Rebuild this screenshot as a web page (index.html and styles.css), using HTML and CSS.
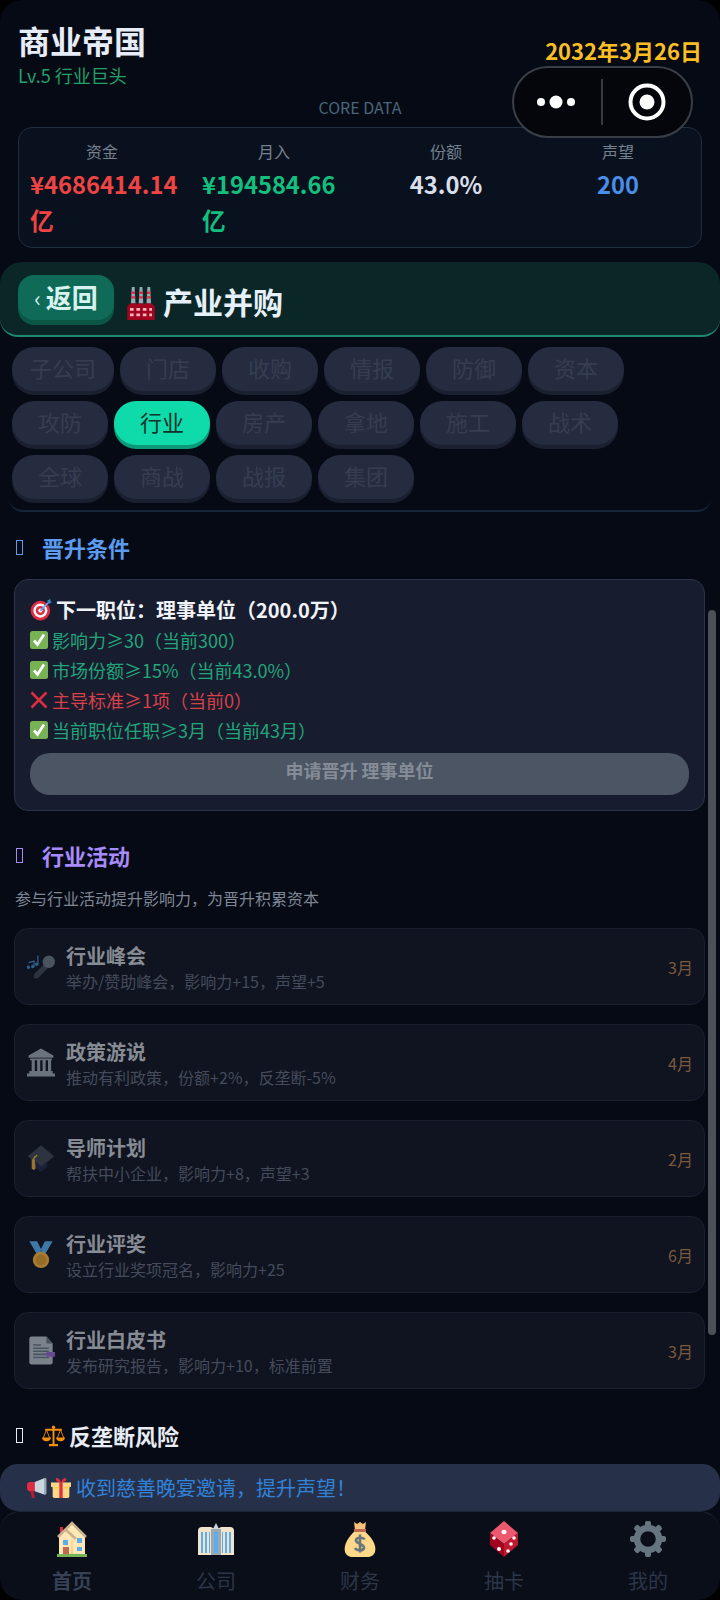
FILE: index.html
```html
<!DOCTYPE html>
<html lang="zh-CN">
<head>
    <meta charset="UTF-8">
    <meta name="viewport" content="width=device-width, initial-scale=1.0">
    <title>商业帝国</title>
    <link rel="stylesheet" href="styles.css">
</head>
<body>
<div class="page">
    <header class="top">
        <div class="top-row">
            <div>
                <div class="game-title">商业帝国</div>
                <div class="level">Lv.5 行业巨头</div>
            </div>
            <div class="date">2032年3月26日</div>
        </div>
        <div class="core-label">CORE DATA</div>
        <div class="stats">
            <div class="stat">
                <div class="stat-label">资金</div>
                <div class="stat-value red">¥4686414.14亿</div>
            </div>
            <div class="stat">
                <div class="stat-label">月入</div>
                <div class="stat-value green">¥194584.66亿</div>
            </div>
            <div class="stat">
                <div class="stat-label">份额</div>
                <div class="stat-value white">43.0%</div>
            </div>
            <div class="stat">
                <div class="stat-label">声望</div>
                <div class="stat-value blue">200</div>
            </div>
        </div>
    </header>

    <!-- 小程序胶囊 -->
    <div class="capsule">
        <svg class="capsule-dots" viewBox="0 0 46 14"><circle cx="8" cy="7" r="4"/><circle cx="23" cy="7" r="6.5"/><circle cx="38" cy="7" r="4"/></svg>
        <span class="capsule-line"></span>
        <svg class="capsule-target" viewBox="0 0 38 38"><circle cx="19" cy="19" r="16.5" fill="none" stroke="#fff" stroke-width="4"/><circle cx="19" cy="19" r="7.5" fill="#fff"/></svg>
    </div>

    <div class="sub-head">
        <div class="back-btn"><span class="back-arrow">‹</span>返回</div>
        <svg class="head-icon" viewBox="0 0 30 36">
            <path fill="#99aab5" d="M5 0h3l1 18H4zM13.5 0h3l1 18h-5zM22 0h3l1 18h-5z"/>
            <path fill="#dd2e44" d="M4.7 5h3.6l.2 2.5h-4zM4.4 10h4.2l.2 2.5H4.3zM13.2 5h3.6l.2 2.5h-4zM12.9 10h4.2l.2 2.5h-4.6zM21.7 5h3.6l.2 2.5h-4zM21.4 10h4.2l.2 2.5h-4.6z"/>
            <path fill="#a0041e" d="M0 21l3-3h24l3 3v15H0z"/>
            <path fill="#ffb3bd" d="M3 23h4v3H3zM10 23h4v3h-4zM17 23h4v3h-4zM24 23h3v3h-3zM3 29h4v3H3zM10 29h4v3h-4zM17 29h4v3h-4zM24 29h3v3h-3z"/>
        </svg>
        <div class="head-title">产业并购</div>
    </div>

    <div class="tabs">
        <div class="tab">子公司</div>
        <div class="tab">门店</div>
        <div class="tab">收购</div>
        <div class="tab">情报</div>
        <div class="tab">防御</div>
        <div class="tab">资本</div>
        <div class="tab">攻防</div>
        <div class="tab active">行业</div>
        <div class="tab">房产</div>
        <div class="tab">拿地</div>
        <div class="tab">施工</div>
        <div class="tab">战术</div>
        <div class="tab">全球</div>
        <div class="tab">商战</div>
        <div class="tab">战报</div>
        <div class="tab">集团</div>
    </div>

    <main class="content">
        <span class="scroll-thumb"></span>

        <h2 class="section-title title-blue"><span class="tofu"></span>晋升条件</h2>
        <div class="promo-card">
            <div class="promo-title">
                <svg class="promo-icon" viewBox="0 0 36 36">
                    <circle cx="17" cy="19" r="16" fill="#dd2e44"/><circle cx="17" cy="19" r="11.5" fill="#f5f8fa"/><circle cx="17" cy="19" r="7.5" fill="#dd2e44"/><circle cx="17" cy="19" r="3.5" fill="#f5f8fa"/>
                    <path d="M17 19L31 5" stroke="#55acee" stroke-width="2.5"/><path fill="#3b88c3" d="M28 3l5-3 1 4 2 1-5 3z"/>
                </svg>下一职位：理事单位（200.0万）
            </div>
            <div class="cond pass"><svg class="cond-icon" viewBox="0 0 36 36"><rect x="0" y="0" width="36" height="36" rx="5" fill="#77b255"/><path d="M8 19l7 8L28 7" fill="none" stroke="#fff" stroke-width="5.5"/></svg>影响力≥30（当前300）</div>
            <div class="cond pass"><svg class="cond-icon" viewBox="0 0 36 36"><rect x="0" y="0" width="36" height="36" rx="5" fill="#77b255"/><path d="M8 19l7 8L28 7" fill="none" stroke="#fff" stroke-width="5.5"/></svg>市场份额≥15%（当前43.0%）</div>
            <div class="cond fail"><svg class="cond-icon" viewBox="0 0 36 36"><path d="M3 3l30 30M33 3L3 33" stroke="#dd2e44" stroke-width="5"/></svg>主导标准≥1项（当前0）</div>
            <div class="cond pass"><svg class="cond-icon" viewBox="0 0 36 36"><rect x="0" y="0" width="36" height="36" rx="5" fill="#77b255"/><path d="M8 19l7 8L28 7" fill="none" stroke="#fff" stroke-width="5.5"/></svg>当前职位任职≥3月（当前43月）</div>
            <div class="promo-btn">申请晋升 理事单位</div>
        </div>

        <h2 class="section-title title-purple"><span class="tofu"></span>行业活动</h2>
        <p class="section-desc">参与行业活动提升影响力，为晋升积累资本</p>

        <div class="act-list">
            <div class="act">
                <svg class="act-icon" viewBox="0 0 36 36">
                    <path d="M9 28L24 13l5 5L14 33H9z" fill="#3d4450"/><circle cx="28" cy="12" r="8" fill="#67757f"/>
                    <path d="M2 13l7-2v8M14 4v11" fill="none" stroke="#3b88c3" stroke-width="1.6"/><circle cx="1.6" cy="19" r="2.2" fill="#3b88c3"/><circle cx="7.4" cy="18" r="2.2" fill="#3b88c3"/><circle cx="12.4" cy="15" r="2.2" fill="#3b88c3"/>
                </svg>
                <div class="act-text">
                    <div class="act-name">行业峰会</div>
                    <div class="act-sub">举办/赞助峰会，影响力+15，声望+5</div>
                </div>
                <div class="act-time">3月</div>
            </div>
            <div class="act">
                <svg class="act-icon" viewBox="0 0 36 36" fill="#99a3ad">
                    <path d="M18 0L2 9v3h32V9zM4 13h28v2H4zM6 15h4v14H6zM13 15h4v14h-4zM20 15h4v14h-4zM27 15h4v14h-4zM3 29h30v3H3zM0 32h36v4H0z"/>
                </svg>
                <div class="act-text">
                    <div class="act-name">政策游说</div>
                    <div class="act-sub">推动有利政策，份额+2%，反垄断-5%</div>
                </div>
                <div class="act-time">4月</div>
            </div>
            <div class="act">
                <svg class="act-icon" viewBox="0 0 36 36">
                    <path fill="#3d4450" d="M18 1L35 15 18 29 1 15z"/>
                    <path fill="#1f2a44" d="M9 20l9 8 8-6v7l-8 6-9-6z"/>
                    <path d="M8 19c1-2 3-4 5-5" fill="none" stroke="#f4c430" stroke-width="1.6"/><path fill="#e0a93b" d="M6 19h4l1 12-2 2-3-2z"/>
                </svg>
                <div class="act-text">
                    <div class="act-name">导师计划</div>
                    <div class="act-sub">帮扶中小企业，影响力+8，声望+3</div>
                </div>
                <div class="act-time">2月</div>
            </div>
            <div class="act">
                <svg class="act-icon" viewBox="0 0 36 36">
                    <path fill="#55acee" d="M3 1h10l5 10 5-10h10L22 20h-8z"/>
                    <path fill="#3b88c3" d="M14 20l4-9 4 9z"/>
                    <circle cx="18" cy="25" r="10.5" fill="#f4b13f"/><circle cx="18" cy="25" r="7" fill="#dc9a2a"/>
                </svg>
                <div class="act-text">
                    <div class="act-name">行业评奖</div>
                    <div class="act-sub">设立行业奖项冠名，影响力+25</div>
                </div>
                <div class="act-time">6月</div>
            </div>
            <div class="act">
                <svg class="act-icon" viewBox="0 0 36 36">
                    <path fill="#b3bcc4" d="M3 3a3 3 0 0 1 3-3h19l8 9v24a3 3 0 0 1-3 3H6a3 3 0 0 1-3-3z"/>
                    <path fill="#66757f" d="M25 0l8 9h-8zM8 10h10v2H8zM8 14h20v2H8zM8 18h20v2H8zM8 22h20v2H8zM8 26h20v2H8z"/>
                    <path fill="#9266cc" d="M26 20h10v6H26l-3-3z"/>
                </svg>
                <div class="act-text">
                    <div class="act-name">行业白皮书</div>
                    <div class="act-sub">发布研究报告，影响力+10，标准前置</div>
                </div>
                <div class="act-time">3月</div>
            </div>
        </div>

        <h2 class="section-title title-white"><span class="tofu"></span>
            <svg class="title-icon" viewBox="0 0 36 36" fill="none" stroke="#f4900c">
                <path d="M18 3v29M5 9h26" stroke-width="3"/><path d="M11 33h14" stroke-width="3.5"/><circle cx="18" cy="5" r="2.5" fill="#f4900c" stroke="none"/>
                <path d="M7 9L2 22M7 9l5 13M29 9l-5 13M29 9l5 13" stroke-width="1.4"/>
                <path d="M0 21h14a7 6 0 0 1-14 0zM22 21h14a7 6 0 0 1-14 0z" fill="#f4900c" stroke="none"/>
            </svg>反垄断风险
        </h2>
    </main>

    <div class="notice">
        <svg class="notice-icon" viewBox="0 0 36 36">
            <path fill="#be1931" d="M6 24h6l2 12H9z"/><path fill="#dd2e44" d="M0 13a6 6 0 0 1 6-6h8v17H6a6 6 0 0 1-6-6z"/>
            <path fill="#ccd6dd" d="M14 7L32 0v30L14 24z"/><rect x="31" y="0" width="4" height="30" rx="2" fill="#99aab5"/>
        </svg>
        <svg class="notice-icon" viewBox="0 0 36 36">
            <path fill="#fdd888" d="M3 13h30v20a3 3 0 0 1-3 3H6a3 3 0 0 1-3-3z"/><path fill="#fdd888" d="M0 8h36v8H0z"/>
            <path fill="#dd2e44" d="M15 8h6v28h-6zM18 8C12 8 7 5 9 1c3-3 7 2 9 7 2-5 6-10 9-7 2 4-3 7-9 7z"/><path fill="#ffcc4d" d="M3 16h12v3H3zM21 16h12v3H21z"/>
        </svg>
        <span class="notice-text">收到慈善晚宴邀请，提升声望！</span>
    </div>

    <nav class="tabbar">
        <div class="nav-item on">
            <svg class="nav-icon" viewBox="0 0 36 36">
                <path fill="#dd2e44" d="M6 6h3v8H6z"/>
                <path fill="#ffe8b6" d="M18 1L5 15v18h26V15z"/>
                <path fill="#ffcc7f" d="M18 8l-1 25h2z"/>
                <path fill="none" stroke="#c9b28f" stroke-width="2.5" d="M4 16L18 2l14 14M11 8l11 10"/>
                <path fill="#5dadec" d="M9 19h5v5H9zM23 17h5v5h-5zM23 26h5v4h-5z"/><path fill="#c1694f" d="M9 26h6v7H9z"/>
                <path fill="#77b255" d="M3 33h30v3H3z"/>
            </svg>
            <span>首页</span>
        </div>
        <div class="nav-item">
            <svg class="nav-icon" viewBox="0 0 36 36">
                <path fill="#ccd6dd" d="M15 8l3-6 3 6v4h-6z"/>
                <path fill="#f1e3cc" d="M0 10a4 4 0 0 1 4-4h9l5 3 5-3h9a4 4 0 0 1 4 4v24H0z"/>
                <path fill="#99aab5" d="M13 8h10v26H13z"/>
                <path fill="#5dadec" d="M3 11h2v21H3zM7 11h2v21H7zM11 11h1v21h-1zM16 11h4v21h-4zM24 11h1v21h-1zM27 11h2v21h-2zM31 11h2v21h-2z"/>
            </svg>
            <span>公司</span>
        </div>
        <div class="nav-item">
            <svg class="nav-icon" viewBox="0 0 36 36">
                <path fill="#fdd888" d="M13 10C7 15 1 24 3 31c1 3 4 5 8 5h14c4 0 7-2 8-5 2-7-4-16-11-21z"/>
                <path fill="#f4c27a" d="M12 1l3 2 3-2 3 2 3-2-1 8H13z"/><path fill="#bf6952" d="M12 8h12v3H12z"/>
                <path fill="none" stroke="#67757f" stroke-width="2.6" d="M22.5 18.5c-1-2-7.5-3-8.5.5-1 4 8.5 3.5 8 8-.5 3-7.5 3-9 0M18 13.5v18"/>
            </svg>
            <span>财务</span>
        </div>
        <div class="nav-item">
            <svg class="nav-icon" viewBox="0 0 36 36">
                <path fill="#ea596e" d="M18 0l14 12-14 11L4 12z"/>
                <path fill="#a0041e" d="M4 12l14 11v13L4 24z"/>
                <path fill="#be1931" d="M32 12L18 23v13l14-12z"/>
                <g fill="#fff"><ellipse cx="18" cy="11" rx="2.6" ry="2.2"/><circle cx="8" cy="17" r="1.8"/><circle cx="13" cy="28" r="2"/><circle cx="28" cy="17" r="1.8"/><circle cx="25" cy="23" r="1.8"/><circle cx="22" cy="30" r="1.8"/></g>
            </svg>
            <span>抽卡</span>
        </div>
        <div class="nav-item">
            <svg class="nav-icon" viewBox="0 0 36 36">
                <circle cx="18" cy="18" r="11" fill="none" stroke="#66757f" stroke-width="6.5"/>
                <g fill="#66757f">
                    <rect x="15" y="0" width="6" height="7" rx="2"/><rect x="15" y="29" width="6" height="7" rx="2"/>
                    <rect x="0" y="15" width="7" height="6" rx="2"/><rect x="29" y="15" width="7" height="6" rx="2"/>
                    <rect x="15" y="0" width="6" height="7" rx="2" transform="rotate(45 18 18)"/><rect x="15" y="0" width="6" height="7" rx="2" transform="rotate(135 18 18)"/>
                    <rect x="15" y="0" width="6" height="7" rx="2" transform="rotate(225 18 18)"/><rect x="15" y="0" width="6" height="7" rx="2" transform="rotate(315 18 18)"/>
                </g>
            </svg>
            <span>我的</span>
        </div>
    </nav>
</div>
</body>
</html>
```
FILE: styles.css
```css
* {
    box-sizing: border-box;
}

html, body {
    margin: 0;
    padding: 0;
    background: #000;
}

body {
    font-family: "Noto Sans CJK SC", "Noto Sans", sans-serif;
    width: 720px;
    height: 1600px;
    overflow: hidden;
}

.page {
    position: relative;
    width: 720px;
    height: 1600px;
    display: flex;
    flex-direction: column;
    background: #060a14;
    border-radius: 22px;
    overflow: hidden;
}

/* top header */
.top {
    padding: 18px 18px 0;
}

.top-row {
    display: flex;
    justify-content: space-between;
    align-items: flex-start;
}

.game-title {
    font-size: 32px;
    line-height: 44px;
    font-weight: 700;
    color: #e6edf8;
}

.level {
    font-size: 18px;
    line-height: 24px;
    margin-top: 1px;
    color: #22a06b;
}

.date {
    font-size: 22px;
    line-height: 32px;
    font-weight: 700;
    color: #fbbf24;
    margin-top: 16px;
}

.core-label {
    text-align: center;
    font-size: 16px;
    line-height: 20px;
    margin-top: 10px;
    color: #4a6678;
}

.stats {
    display: grid;
    grid-template-columns: repeat(4, 1fr);
    column-gap: 28px;
    height: 121px;
    margin-top: 10px;
    padding: 12px 11px 0;
    background: #0a111e;
    border: 1px solid #1f2f3f;
    border-radius: 14px;
}

.stat {
    display: flex;
    flex-direction: column;
    align-items: center;
    min-width: 0;
}

.stat-label {
    font-size: 16px;
    line-height: 22px;
    color: #75808f;
}

.stat-value {
    max-width: 100%;
    font-size: 23.7px;
    line-height: 36px;
    font-weight: 700;
    margin-top: 4px;
}

.red { color: #ef4444; }
.green { color: #12bf7f; }
.white { color: #d9dfea; }
.blue { color: #4a8ee8; }

/* capsule of the host app */
.capsule {
    position: absolute;
    left: 512px;
    top: 66px;
    width: 181px;
    height: 72px;
    display: flex;
    align-items: center;
    background: #04060c;
    border: 2px solid #3a3f47;
    border-radius: 36px;
}

.capsule-dots {
    width: 46px;
    height: 14px;
    margin-left: 19px;
    fill: #fff;
}

.capsule-line {
    width: 2px;
    height: 46px;
    margin-left: 22px;
    background: #363a41;
}

.capsule-target {
    width: 38px;
    height: 38px;
    margin-left: 25px;
}

/* page head */
.sub-head {
    height: 75px;
    margin-top: 14px;
    padding: 13px 18px 0;
    display: flex;
    align-items: flex-start;
    background: #0a2627;
    border-bottom: 2px solid #1c8a72;
    border-radius: 22px 22px 18px 18px;
}

.back-btn {
    width: 96px;
    height: 45px;
    padding-bottom: 1px;
    display: flex;
    align-items: center;
    justify-content: center;
    font-size: 26px;
    line-height: 44px;
    font-weight: 700;
    color: #d8f3ef;
    background: #0f6b57;
    border-radius: 16px;
    box-shadow: 0 5px 0 #0c5646;
}

.back-arrow {
    font-size: 22px;
    font-weight: 400;
    margin-right: 5px;
}

.head-icon {
    width: 28px;
    height: 33px;
    margin: 12px 0 0 13px;
}

.head-title {
    font-size: 30px;
    line-height: 42px;
    font-weight: 700;
    color: #e6f0f8;
    margin: 5px 0 0 8px;
}

/* tabs */
.tabs {
    display: flex;
    flex-wrap: wrap;
    gap: 10px 6px;
    padding: 10px 12px 10px 3px;
    height: 175px;
    margin: 0 9px;
    align-content: flex-start;
    border-bottom: 2px solid #15263a;
    border-radius: 0 0 14px 14px;
}

.tab {
    min-width: 96px;
    height: 44px;
    padding: 0 18px 4px;
    display: flex;
    align-items: center;
    justify-content: center;
    font-size: 22px;
    color: #353e51;
    background: #252c40;
    border-radius: 22px;
    box-shadow: 0 4px 0 #1a2030;
}

.tab.active {
    color: #0d332a;
    background: #0fdaa9;
    box-shadow: 0 4px 0 #0a9a78;
}

/* scroll area */
.content {
    position: relative;
    flex: 1;
    min-height: 0;
    overflow: hidden;
    padding: 20px 15px 0 14px;
}

.scroll-thumb {
    position: absolute;
    left: 708px;
    top: 98px;
    width: 8px;
    height: 725px;
    background: #4c5058;
    border-radius: 4px;
}

.section-title {
    display: flex;
    align-items: center;
    height: 30px;
    margin: 29px 0 14px;
    font-size: 22px;
    line-height: 30px;
    font-weight: 700;
}

.section-title:first-of-type {
    margin-top: 0;
}

.tofu {
    width: 7px;
    height: 15px;
    margin: 0 19px 0 2px;
    border: 1px solid currentColor;
}

.title-blue { color: #5b9cf0; }
.title-purple { color: #a78bfa; }
.title-white { color: #e8edf5; }

.title-icon {
    width: 23px;
    height: 23px;
    margin-right: 4px;
}

.promo-card {
    height: 232px;
    margin-top: 17px;
    padding: 15px 15px 14px;
    background: #171d2e;
    border: 1px solid #2a3347;
    border-radius: 14px;
}

.promo-title {
    display: flex;
    align-items: center;
    font-size: 20px;
    line-height: 30px;
    font-weight: 700;
    color: #f0f3f8;
}

.promo-icon {
    width: 22px;
    height: 22px;
    margin-right: 4px;
}

.cond {
    display: flex;
    align-items: center;
    font-size: 18px;
    line-height: 30px;
}

.cond-icon {
    width: 18px;
    height: 18px;
    margin-right: 4px;
}

.pass { color: #23a57c; }
.fail { color: #d9404a; }

.promo-btn {
    height: 42px;
    margin-top: 8px;
    text-align: center;
    font-size: 18px;
    line-height: 35px;
    font-weight: 700;
    color: #858c98;
    background: #4b5563;
    border-radius: 20px;
}

.section-desc {
    margin: 16px 0 18px 1px;
    font-size: 16px;
    line-height: 24px;
    color: #7f8796;
}

.act-list {
    display: flex;
    flex-direction: column;
    gap: 19px;
    margin-bottom: 31px;
}

.act {
    height: 77px;
    display: flex;
    align-items: flex-start;
    padding: 14px 11px 0 12px;
    background: #0f1420;
    border: 1px solid #1a2030;
    border-radius: 14px;
}

.act-icon {
    width: 28px;
    height: 29px;
    margin: 9px 11px 0 0;
    opacity: .66;
}

.act-text {
    flex: 1;
}

.act-name {
    font-size: 20px;
    line-height: 26px;
    font-weight: 700;
    color: #878b94;
}

.act-sub {
    font-size: 16px;
    line-height: 24px;
    color: #454b5a;
}

.act-time {
    font-size: 16px;
    line-height: 24px;
    margin-top: 12px;
    color: #7a5a3e;
}

/* notice */
.notice {
    flex: none;
    height: 47px;
    display: flex;
    align-items: center;
    padding-left: 27px;
    background: #263149;
    border-radius: 18px;
}

.notice-icon {
    width: 20px;
    height: 20px;
    margin-right: 4px;
}

.notice-text {
    margin-left: 1px;
    font-size: 20px;
    line-height: 28px;
    color: #3182d8;
}

/* bottom bar */
.tabbar {
    flex: none;
    height: 89px;
    display: flex;
    background: #0a0e18;
    border-top: 1px solid #1b2638;
    border-radius: 20px 20px 0 0;
}

.nav-item {
    flex: 1;
    display: flex;
    flex-direction: column;
    align-items: center;
    padding-top: 9px;
    font-size: 20px;
    line-height: 28px;
    color: #2c3648;
}

.nav-item.on {
    font-weight: 700;
    color: #364154;
}

.nav-icon {
    width: 36px;
    height: 36px;
    margin-bottom: 10px;
}
```
